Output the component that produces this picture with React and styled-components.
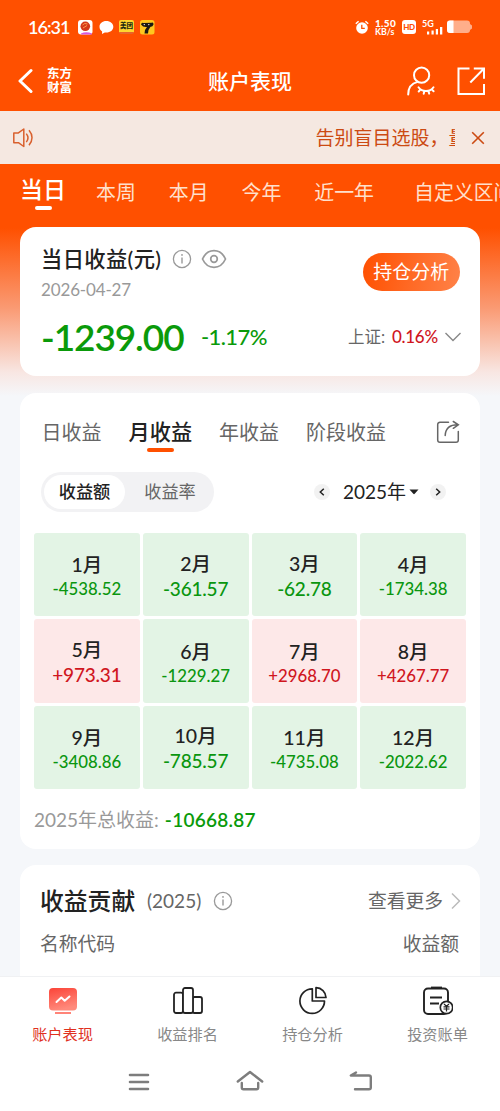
import React from 'react';
import styled, { createGlobalStyle, css } from 'styled-components';

const months = [
  { month: 1, value: '-4538.52' },
  { month: 2, value: '-361.57' },
  { month: 3, value: '-62.78' },
  { month: 4, value: '-1734.38' },
  { month: 5, value: '+973.31' },
  { month: 6, value: '-1229.27' },
  { month: 7, value: '+2968.70' },
  { month: 8, value: '+4267.77' },
  { month: 9, value: '-3408.86' },
  { month: 10, value: '-785.57' },
  { month: 11, value: '-4735.08' },
  { month: 12, value: '-2022.62' },
];

const periods = ['本周', '本月', '今年', '近一年', '自定义区间'];

const InfoIcon = () => (
  <svg width="20" height="20" viewBox="0 0 20 20" fill="none">
    <circle cx="10" cy="10" r="8.6" stroke="#999" strokeWidth="1.3" />
    <path d="M10 8.6v6" stroke="#999" strokeWidth="1.4" />
    <circle cx="10" cy="5.9" r="0.9" fill="#999" />
  </svg>
);

const StatusBar = () => (
  <Status>
    <Clock>16:31</Clock>
    <StatusApps>
      <svg width="15" height="15" viewBox="0 0 15 15">
        <rect width="14.5" height="14.5" rx="3" fill="#fff" />
        <path d="M3 13.5q5-2.5 11 0v1H3z" fill="#d65be0" />
        <circle cx="7.3" cy="6.3" r="4.8" fill="#d4381c" />
        <path d="M4.5 5q2-2.5 5-1M5 8l4-2.5" stroke="#ff9a4a" fill="none" />
      </svg>
      <svg width="15" height="15" viewBox="0 0 15 15">
        <path
          d="M7.3 1C3.3 1 .5 3.500.5 6.800c0 2 1 3.700 2.600 4.700L3 14l2.800-1.500c5 .6 8.500-2 8.500-5.700C14.300 3.500 11.300 1 7.300 1z"
          fill="#fff"
        />
      </svg>
      <MeituanBadge>美团</MeituanBadge>
      <svg width="15" height="15" viewBox="0 0 15 15">
        <rect width="14.5" height="14.5" rx="2.5" fill="#ffc71f" />
        <path
          d="M1 4.500Q1.500 2 3.500 3l8-.2q2-1 2 1.700-1 2.500-3 2.200L8.500 10l-.5 3.500H4.500L5 10l2-3Q3 7.500 1 4.500z"
          fill="#1c1712"
        />
        <circle cx="4.3" cy="4.6" r=".7" fill="#fff" />
        <circle cx="8.8" cy="4.6" r=".7" fill="#fff" />
      </svg>
    </StatusApps>
    <StatusRight>
      <svg width="14" height="15" viewBox="0 0 14 15">
        <circle cx="7" cy="8" r="5.8" fill="#fff" />
        <path
          d="M.8 3.800L3.600 1.200M13.200 3.800l-2.800-2.600"
          stroke="#fff"
          strokeWidth="1.5"
        />
        <path
          d="M6.800 4.800V8.300h3"
          stroke="#ff5000"
          strokeWidth="1.3"
          fill="none"
        />
      </svg>
      <Speed>
        <b>1.50</b>
        <span>KB/s</span>
      </Speed>
      <HdBadge>HD</HdBadge>
      <Signal>
        <span>5G</span>
        <svg width="17" height="8" viewBox="0 0 17 8" fill="#fff">
          <rect x="0" y="4.5" width="2.2" height="3" />
          <rect x="4.5" y="3.5" width="2.2" height="4" />
          <rect x="8.8" y="2" width="2.2" height="5.5" />
          <rect x="13" y="0" width="2.3" height="7.5" />
        </svg>
      </Signal>
      <svg width="26" height="14" viewBox="0 0 26 14">
        <rect x="0" y=".5" width="23" height="12.5" rx="3" fill="#ffae8a" />
        <path d="M23 4l2 1.500v3L23 10z" fill="#ffae8a" />
        <path d="M3 .5h3.500V13H3a3 3 0 01-3-3V3.500a3 3 0 013-3z" fill="#fff" />
      </svg>
    </StatusRight>
  </Status>
);

const Header = () => (
  <TitleBar>
    <HeaderSide>
      <svg width="16" height="26" viewBox="0 0 16 26" fill="none">
        <path
          d="M14 2.500L3 13l11 10.500"
          stroke="#fff"
          strokeWidth="3"
          strokeLinecap="round"
          strokeLinejoin="round"
        />
      </svg>
      <Brand>
        <span>东方</span>
        <span>财富</span>
      </Brand>
    </HeaderSide>
    <PageTitle>账户表现</PageTitle>
    <HeaderActions>
      <svg
        width="30"
        height="30"
        viewBox="0 0 30 30"
        fill="none"
        stroke="#fff"
        strokeWidth="2"
        strokeLinecap="round"
      >
        <circle cx="15.6" cy="9.2" r="7.6" />
        <path d="M2.200 28.500c0-7 4-11.300 9.500-12.600" />
        <path d="M12.500 21.300c3.500 5 11.500 5 15 0M14.400 23.600l-1.700 1.900M18.300 25.200l-.6 2.600M22.400 25.100l.8 2.500M25.700 23.400l1.900 1.900" />
      </svg>
      <svg
        width="30"
        height="30"
        viewBox="0 0 30 30"
        fill="none"
        stroke="#fff"
        strokeWidth="2"
      >
        <path d="M13.500 2.500h-11v25.500H28V18" />
        <path d="M17.800 2.500H28v10.200M28 2.500L14.300 16.500" />
      </svg>
    </HeaderActions>
  </TitleBar>
);

const NoticeBar = () => (
  <Notice>
    <svg
      width="22"
      height="22"
      viewBox="0 0 22 22"
      fill="none"
      stroke="#d9602e"
      strokeWidth="1.5"
      strokeLinejoin="round"
    >
      <path d="M1.800 5.900h4.600L11.800 2v17.500L6.400 15.700H1.800z" />
      <path d="M14.300 6.600c2 2.500 2 6 0 8.500M17 3.300c4 4.500 4 10.500 0 15" />
    </svg>
    <NoticeText>告别盲目选股，量</NoticeText>
    <svg width="14" height="14" viewBox="0 0 14 14">
      <path
        d="M1.200 1.200l11.600 11.600M12.800 1.200L1.200 12.800"
        stroke="#cc4a12"
        strokeWidth="1.6"
      />
    </svg>
  </Notice>
);

const TodayCard = () => (
  <SummaryCard>
    <SummaryTop>
      <div>
        <SummaryTitle>
          <span>当日收益(元)</span>
          <InfoIcon />
          <svg
            width="26"
            height="20"
            viewBox="0 0 26 20"
            fill="none"
            stroke="#999"
            strokeWidth="1.7"
          >
            <path d="M1.500 10C4 4.500 8.200 1.700 13 1.700S22 4.500 24.500 10C22 15.500 17.800 18.300 13 18.300S4 15.500 1.500 10z" />
            <circle cx="13" cy="10" r="3.3" />
          </svg>
        </SummaryTitle>
        <DateText>2026-04-27</DateText>
      </div>
      <AnalyzeButton>持仓分析</AnalyzeButton>
    </SummaryTop>
    <SummaryBottom>
      <Amount>-1239.00</Amount>
      <Percent>-1.17%</Percent>
      <IndexLabel>上证:</IndexLabel>
      <IndexValue>0.16%</IndexValue>
      <svg width="18" height="10" viewBox="0 0 18 10" fill="none">
        <path d="M1.500 1l7.500 7.500L16.500 1" stroke="#888" strokeWidth="1.4" />
      </svg>
    </SummaryBottom>
  </SummaryCard>
);

const CalendarCard = () => (
  <Card>
    <TabRow>
      <Tab>日收益</Tab>
      <Tab $active>月收益</Tab>
      <Tab>年收益</Tab>
      <Tab>阶段收益</Tab>
      <svg
        width="24"
        height="24"
        viewBox="0 0 24 24"
        fill="none"
        stroke="#666"
        strokeWidth="1.5"
        strokeLinecap="round"
      >
        <path d="M12.500 2.200H4a2.300 2.300 0 00-2.300 2.300V20A2.300 2.300 0 004 22.300h16a2.300 2.300 0 002.300-2.300v-8.500" />
        <path d="M9.200 15.500C9.500 9 13.500 4.700 22 4.800M17.300 1.500l5 3.300-5 3.500" />
      </svg>
    </TabRow>
    <FilterRow>
      <Segment>
        <SegmentItem $active>收益额</SegmentItem>
        <SegmentItem>收益率</SegmentItem>
      </Segment>
      <YearPicker>
        <YearArrow>
          <svg width="8" height="10" viewBox="0 0 8 10" fill="none">
            <path d="M5.800 1.700L2.300 5l3.500 3.300" stroke="#222" strokeWidth="1.5" />
          </svg>
        </YearArrow>
        <YearText>2025年</YearText>
        <svg width="10" height="6" viewBox="0 0 10 6">
          <path d="M.5.5h9L5.700 4.800q-.7.700-1.400 0z" fill="#222" />
        </svg>
        <YearArrow $next>
          <svg width="8" height="10" viewBox="0 0 8 10" fill="none">
            <path d="M2.200 1.700L5.700 5 2.200 8.300" stroke="#222" strokeWidth="1.5" />
          </svg>
        </YearArrow>
      </YearPicker>
    </FilterRow>
    <MonthGrid>
      {months.map(({ month, value }) => (
        <MonthCell key={month} $up={value[0] === '+'}>
          <MonthName>{month}月</MonthName>
          <MonthValue $small={value.length > 7}>{value}</MonthValue>
        </MonthCell>
      ))}
    </MonthGrid>
    <TotalRow>
      2025年总收益:<TotalValue>-10668.87</TotalValue>
    </TotalRow>
  </Card>
);

const ContributionCard = () => (
  <BottomCard>
    <ContributionTop>
      <ContributionTitle>收益贡献</ContributionTitle>
      <ContributionYear>(2025)</ContributionYear>
      <InfoIcon />
      <MoreLink>查看更多</MoreLink>
      <svg width="10" height="18" viewBox="0 0 10 18" fill="none">
        <path d="M1 1.500L8.500 9 1 16.500" stroke="#bbb" strokeWidth="1.5" />
      </svg>
    </ContributionTop>
    <ColumnHead>
      <span>名称代码</span>
      <span>收益额</span>
    </ColumnHead>
  </BottomCard>
);

const TabBar = () => (
  <Nav>
    <NavItem $active>
      <svg width="30" height="30" viewBox="0 0 30 30" fill="none">
        <defs>
          <linearGradient id="screen" x1="0" y1="0" x2="0.3" y2="1">
            <stop offset="0" stopColor="#fb4438" />
            <stop offset="1" stopColor="#ff8a7c" />
          </linearGradient>
        </defs>
        <rect x="1" y="2" width="28" height="22.5" rx="4" fill="url(#screen)" />
        <path
          d="M8.500 16l4.800-4.500 3.400 3.300 4.800-4.300"
          stroke="#fff"
          strokeWidth="2"
          strokeLinecap="round"
          strokeLinejoin="round"
        />
        <path d="M7 27h16" stroke="#ff8478" strokeWidth="2" />
      </svg>
      账户表现
    </NavItem>
    <NavItem>
      <svg
        width="30"
        height="30"
        viewBox="0 0 30 30"
        fill="none"
        stroke="#222"
        strokeWidth="1.8"
      >
        <rect x="1" y="6.7" width="9" height="20.3" rx="2" />
        <rect x="19.5" y="11" width="9.5" height="16" rx="2" />
        <rect x="10" y="2" width="10" height="25" rx="2" fill="#fff" />
      </svg>
      收益排名
    </NavItem>
    <NavItem>
      <svg
        width="30"
        height="30"
        viewBox="0 0 30 30"
        fill="none"
        stroke="#222"
        strokeWidth="1.7"
        strokeLinejoin="round"
      >
        <path d="M14.300 2.800A12.300 12.300 0 1026.500 15H14.300z" />
        <path d="M18 1.700v9.800h10C27.800 6 23.500 1.900 18 1.700z" />
      </svg>
      持仓分析
    </NavItem>
    <NavItem>
      <svg
        width="30"
        height="30"
        viewBox="0 0 30 30"
        fill="none"
        stroke="#222"
        strokeWidth="1.9"
      >
        <rect x="1" y="2.5" width="24" height="25.5" rx="4" />
        <path d="M8 1.700h11" strokeWidth="2.2" />
        <path d="M7 11.500h12M7 17.500h9" />
        <circle cx="23.5" cy="21.5" r="6.2" fill="#fff" strokeWidth="1.7" />
        <path
          d="M21 18l2.500 2.300L26 18M20.500 20.800h6M20.500 23h6M23.500 20.500v5"
          strokeWidth="1.2"
        />
      </svg>
      投资账单
    </NavItem>
  </Nav>
);

const App = () => (
  <>
    <GlobalStyle />
    <Screen>
      <StatusBar />
      <Header />
      <NoticeBar />
      <Periods>
        <CurrentPeriod>当日</CurrentPeriod>
        {periods.map(name => (
          <Period key={name}>{name}</Period>
        ))}
      </Periods>
      <Content>
        <TodayCard />
        <CalendarCard />
        <ContributionCard />
      </Content>
      <TabBar />
      <SystemNav>
        <svg width="24" height="24" viewBox="0 0 24 24">
          <path
            d="M3 5h18M3 12h18M3 19h18"
            stroke="#7d7d7d"
            strokeWidth="2.6"
            strokeLinecap="round"
          />
        </svg>
        <svg
          width="30"
          height="24"
          viewBox="0 0 30 24"
          fill="none"
          stroke="#7d7d7d"
          strokeWidth="2.4"
          strokeLinecap="round"
          strokeLinejoin="round"
        >
          <path d="M2.800 11.500L15 2l12.200 9.500M6.800 13v4.500q0 1.700 1.700 1.700h13q1.700 0 1.700-1.700V13" />
        </svg>
        <svg
          width="26"
          height="24"
          viewBox="0 0 26 24"
          fill="none"
          stroke="#7d7d7d"
          strokeWidth="2.4"
          strokeLinecap="round"
          strokeLinejoin="round"
        >
          <path d="M8 2.500L2.800 5.500H21q1.800 0 1.800 1.800V17.500q0 1.800-1.800 1.800H7" />
        </svg>
      </SystemNav>
    </Screen>
  </>
);

export default App;

const GlobalStyle = createGlobalStyle`
  * {
    box-sizing: border-box;
  }

  body {
    margin: 0;
    font-family: Lato, 'Noto Sans CJK SC', sans-serif;
    color: #222;
  }

  svg {
    display: block;
    flex-shrink: 0;
  }
`;

const Screen = styled.div`
  display: flex;
  flex-direction: column;
  width: 500px;
  height: 1111px;
  overflow: hidden;
  background: linear-gradient(
    #ff5000 0,
    #ff5000 228px,
    #fa9a73 308px,
    #f8e6e2 372px,
    #f5f7fa 396px
  );
`;

const Status = styled.div`
  display: flex;
  align-items: center;
  height: 54px;
  padding: 0 27px 0 28px;
`;

const Clock = styled.span`
  width: 50px;
  font-size: 18px;
  font-weight: 600;
  letter-spacing: -1px;
  line-height: 20px;
  color: #fff;
`;

const StatusApps = styled.div`
  display: flex;
  gap: 5.5px;
`;

const MeituanBadge = styled.div`
  width: 15px;
  height: 14px;
  border-radius: 2px;
  border-bottom: 2px solid #e8632b;
  background: #ffd52e;
  font-size: 6.5px;
  font-weight: 900;
  line-height: 11px;
  text-align: center;
  color: #1c2a12;
  white-space: nowrap;
`;

const StatusRight = styled.div`
  display: flex;
  align-items: center;
  margin-left: auto;
`;

const Speed = styled.div`
  display: flex;
  flex-direction: column;
  width: 21px;
  margin: 1px 6px 0;
  font-size: 8.8px;
  font-weight: 700;
  line-height: 8.5px;
  color: #fff;

  b {
    font-size: 10px;
    letter-spacing: 0.3px;
  }
`;

const HdBadge = styled.span`
  width: 14px;
  height: 14px;
  margin-right: 6px;
  border-radius: 3px;
  background: #fff;
  font-size: 8px;
  font-weight: 900;
  line-height: 14px;
  text-align: center;
  letter-spacing: -0.3px;
  color: #ff5000;
`;

const Signal = styled.div`
  width: 20px;
  margin-right: 5px;

  span {
    display: block;
    height: 7px;
    font-size: 9px;
    font-weight: 700;
    line-height: 7px;
    color: #fff;
  }

  svg {
    margin-left: 5px;
  }
`;

const TitleBar = styled.div`
  display: grid;
  grid-template-columns: 1fr auto 1fr;
  align-items: center;
  height: 57px;
  padding: 0 14px 4px 17px;
`;

const HeaderSide = styled.div`
  display: flex;
  align-items: center;
  gap: 14px;
`;

const Brand = styled.div`
  display: flex;
  flex-direction: column;
  font-size: 12.5px;
  font-weight: 700;
  line-height: 13.5px;
  color: #fff;
`;

const PageTitle = styled.h1`
  margin: 0 3px 0 0;
  font-size: 21px;
  font-weight: 500;
  line-height: 30px;
  color: #fff;
`;

const HeaderActions = styled.div`
  display: flex;
  justify-content: flex-end;
  gap: 20px;
`;

const Notice = styled.div`
  display: flex;
  align-items: center;
  height: 53px;
  padding: 0 15.5px 0 12px;
  background: #f5e8e1;
`;

const NoticeText = styled.div`
  width: 139.5px;
  margin: 1px 15.5px 0 auto;
  overflow: hidden;
  white-space: nowrap;
  font-size: 19px;
  line-height: 28px;
  color: #cc4a12;
`;

const Periods = styled.div`
  display: flex;
  height: 63px;
  padding-left: 20px;
  overflow: hidden;
  white-space: nowrap;
`;

const CurrentPeriod = styled.div`
  width: 46px;
  margin-right: 30px;
  font-size: 23px;
  font-weight: 500;
  line-height: 50px;
  color: #fff;

  &::after {
    content: '';
    display: block;
    width: 17px;
    height: 4px;
    margin: -8px auto 0;
    border-radius: 2px;
    background: #fff;
  }
`;

const Period = styled.div`
  flex-shrink: 0;
  margin-right: 33px;
  font-size: 19.9px;
  line-height: 56px;
  color: #ffe0cc;

  &:last-child {
    margin-left: 7px;
  }
`;

const Content = styled.main`
  display: flex;
  flex-direction: column;
  flex: 1;
  gap: 16.5px;
  min-height: 0;
  padding: 0 20px;
`;

const Card = styled.section`
  flex-shrink: 0;
  height: 456px;
  border-radius: 16px;
  background: #fff;
`;

const SummaryCard = styled(Card)`
  height: 149px;
  padding: 16px 18px 0 21px;
`;

const SummaryTop = styled.div`
  display: flex;
  justify-content: space-between;
`;

const SummaryTitle = styled.div`
  display: flex;
  align-items: center;
  height: 32px;
  font-size: 21.3px;
  font-weight: 500;
  letter-spacing: 0.35px;
  line-height: 32px;

  span {
    width: 131px;
  }

  svg + svg {
    margin-left: 9px;
  }
`;

const DateText = styled.div`
  font-size: 17px;
  letter-spacing: -0.15px;
  line-height: 29px;
  color: #999;
`;

const AnalyzeButton = styled.button`
  width: 96.5px;
  height: 38px;
  margin: 10px 2.5px 0 0;
  padding: 0;
  border: 0;
  border-radius: 19px;
  background: linear-gradient(100deg, #ff5000, #ff8248);
  font-family: inherit;
  font-size: 19px;
  line-height: 38px;
  color: #fff;
`;

const SummaryBottom = styled.div`
  display: flex;
  align-items: center;
  height: 44px;
  margin-top: 11px;
  line-height: 44px;
`;

const Amount = styled.span`
  width: 160px;
  font-size: 37px;
  font-weight: 600;
  letter-spacing: -1.1px;
  color: #0a9a0a;
`;

const Percent = styled.span`
  font-size: 22px;
  font-weight: 500;
  letter-spacing: -0.6px;
  color: #0a9a0a;
`;

const IndexLabel = styled.span`
  margin-left: auto;
  font-size: 16.5px;
  color: #666;
`;

const IndexValue = styled.span`
  width: 46px;
  margin: 0 6px 0 7px;
  font-size: 17px;
  font-weight: 500;
  letter-spacing: -0.3px;
  color: #d0161e;
`;

const TabRow = styled.div`
  display: flex;
  align-items: center;
  gap: 27px;
  height: 79px;
  padding: 0 20px 0 21.5px;

  svg {
    margin-left: auto;
  }
`;

const Tab = styled.div`
  font-size: 20px;
  line-height: 30px;
  white-space: nowrap;
  color: #666;

  ${({ $active }) =>
    $active &&
    css`
      font-size: 21.2px;
      font-weight: 500;
      color: #222;

      &::after {
        content: '';
        display: block;
        width: 27px;
        height: 4px;
        margin: 1px auto -5px;
        border-radius: 2px;
        background: #ff5000;
      }
    `}
`;

const FilterRow = styled.div`
  display: flex;
  align-items: center;
  justify-content: space-between;
  height: 40px;
  padding: 0 34px 0 21px;
`;

const Segment = styled.div`
  display: flex;
  width: 173px;
  height: 40px;
  padding: 3px;
  border-radius: 20px;
  background: #f2f2f4;
`;

const SegmentItem = styled.div`
  flex: 1;
  padding-left: 4px;
  border-radius: 17px;
  font-size: 17.2px;
  line-height: 34px;
  text-align: center;
  color: #666;

  ${({ $active }) =>
    $active &&
    css`
      flex: 0 0 81px;
      padding-left: 0;
      background: #fff;
      font-weight: 500;
      color: #222;
    `}
`;

const YearPicker = styled.div`
  display: flex;
  align-items: center;
`;

const YearText = styled.span`
  margin: 0 3px 0 13px;
  font-size: 19px;
  line-height: 28px;
`;

const YearArrow = styled.div`
  display: flex;
  align-items: center;
  justify-content: center;
  width: 16px;
  height: 16px;
  margin-left: ${({ $next }) => ($next ? '11px' : '0')};
  border-radius: 50%;
  background: #f2f2f2;
`;

const MonthGrid = styled.div`
  display: grid;
  grid-template-columns: repeat(4, 1fr);
  grid-auto-rows: 83.3px;
  gap: 3px;
  margin: 21.5px 14px 0;
`;

const MonthCell = styled.div`
  display: flex;
  flex-direction: column;
  align-items: center;
  justify-content: center;
  padding-top: 1.5px;
  border-radius: 3px;
  background: ${({ $up }) => ($up ? '#fde8e8' : '#e3f4e5')};
  color: ${({ $up }) => ($up ? '#d0161e' : '#0a960f')};
`;

const MonthName = styled.span`
  font-size: 19.5px;
  font-weight: 500;
  line-height: 27px;
  color: #222;
`;

const MonthValue = styled.span`
  font-size: ${({ $small }) => ($small ? '16.8px' : '19px')};
  font-weight: 500;
  line-height: ${({ $small }) => ($small ? '21px' : '24px')};
  letter-spacing: ${({ $small }) => ($small ? '0' : '-0.2px')};
`;

const TotalRow = styled.div`
  display: flex;
  margin: 16.5px 14px 0;
  font-size: 19px;
  line-height: 30px;
  color: #999;
`;

const TotalValue = styled.span`
  margin-left: 6px;
  font-weight: 600;
  letter-spacing: 0.25px;
  color: #0a9a0a;
`;

const BottomCard = styled(Card)`
  padding: 20px 19px 0 20px;
`;

const ContributionTop = styled.div`
  display: flex;
  align-items: center;
  height: 32px;
  line-height: 32px;
`;

const ContributionTitle = styled.h2`
  width: 107px;
  margin: 0;
  font-size: 23.8px;
  font-weight: 500;
`;

const ContributionYear = styled.span`
  width: 66px;
  font-size: 19px;
  color: #666;
`;

const MoreLink = styled.span`
  margin: 0 8px 0 auto;
  font-size: 18.8px;
  color: #666;
`;

const ColumnHead = styled.div`
  display: flex;
  justify-content: space-between;
  padding: 12px 2px 0 0;
  font-size: 18.8px;
  line-height: 30px;
  color: #666;
`;

const Nav = styled.nav`
  display: grid;
  grid-template-columns: repeat(4, 1fr);
  flex-shrink: 0;
  height: 76px;
  border-top: 1px solid #f0f1f3;
  background: #fff;
`;

const NavItem = styled.div`
  display: flex;
  flex-direction: column;
  align-items: center;
  padding-top: 9px;
  font-size: 15.2px;
  line-height: 37px;
  color: ${({ $active }) => ($active ? '#e0301e' : '#888')};
`;

const SystemNav = styled.div`
  display: flex;
  justify-content: space-between;
  flex-shrink: 0;
  height: 59px;
  padding: 18px 126px 0 127px;
  background: #fff;
`;
